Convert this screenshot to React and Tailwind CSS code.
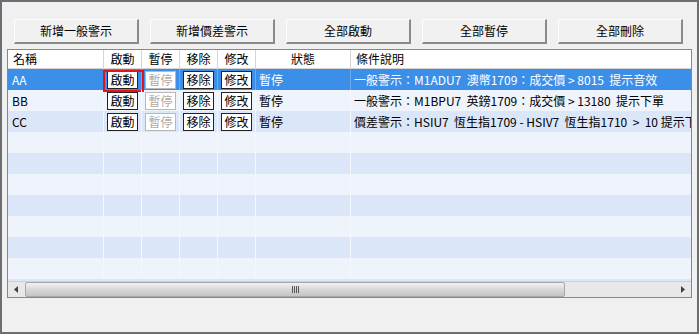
import React from 'react';

const FONT = "font-['Noto_Sans_CJK_TC','Noto_Sans',sans-serif]";

const topButtons = ['新增一般警示', '新增價差警示', '全部啟動', '全部暫停', '全部刪除'];

const rows = [
  { name: 'AA', status: '暫停', cond: '一般警示：M1ADU7  澳幣1709：成交價 > 8015  提示音效', selected: true },
  { name: 'BB', status: '暫停', cond: '一般警示：M1BPU7  英鎊1709：成交價 > 13180  提示下單' },
  { name: 'CC', status: '暫停', cond: '價差警示：HSIU7  恆生指1709 - HSIV7  恆生指1710  >  10 提示下單' },
];

const COLS = 'grid grid-cols-[96px_38px_38px_38px_38px_95px_1fr]';

const CellButton = ({ label, disabled }) => (
  <span
    className={`inline-flex h-[18px] items-center justify-center px-[2px] leading-none border bg-white text-[12px] ${
      disabled ? 'border-[#b8b8b8] text-[#b0a89c]' : 'border-[#222] text-black'
    }`}
  >
    {label}
  </span>
);

const Row = ({ row, index }) => {
  const bg = row?.selected ? 'bg-[#3c8fe8] text-white' : index % 2 === 1 ? 'bg-[#eef3fc] text-black' : 'bg-[#dbe6f8] text-black';
  const line = row?.selected ? 'border-[#6aaaf0]' : 'border-[#f4f7fd]';
  return (
    <div className={`${COLS} h-[21px] ${bg} text-[12px]`}>
      <div className={`flex items-center pl-[4px] border-r ${line}`}>{row?.name}</div>
      <div className={`relative flex items-center justify-center border-r ${line}`}>
        {row && <CellButton label="啟動" />}
        {row?.selected && <div className="absolute left-[-1px] top-[1px] h-[22px] w-[41px] border-2 border-[#e0141e]" />}
      </div>
      <div className={`flex items-center justify-center border-r ${line}`}>{row && <CellButton label="暫停" disabled />}</div>
      <div className={`flex items-center justify-center border-r ${line}`}>{row && <CellButton label="移除" />}</div>
      <div className={`flex items-center justify-center border-r ${line}`}>{row && <CellButton label="修改" />}</div>
      <div className={`flex items-center pl-[3px] border-r ${line}`}>{row?.status}</div>
      <div className="flex items-center pl-[3px] whitespace-pre overflow-hidden">{row?.cond}</div>
    </div>
  );
};

export default function App() {
  const body = Array.from({ length: 10 }, (_, i) => rows[i]);
  return (
    <div className={`${FONT} w-[699px] h-[334px] bg-[#f0f0f0] border-2 border-[#6b6f74] flex flex-col overflow-hidden`}>
      {/* action buttons */}
      <div className="flex gap-[11px] pl-[12px] pt-[17px]">
        {topButtons.map((b) => (
          <button
            key={b}
            className="w-[125px] h-[25px] bg-[#f1f1f1] border-t border-l border-t-[#fdfdfd] border-l-[#fdfdfd] border-b-2 border-r-2 border-b-[#8a8a8a] border-r-[#8a8a8a] text-[12px] text-black"
          >
            {b}
          </button>
        ))}
      </div>

      {/* list view */}
      <div className="ml-[5px] mt-[5px] w-[685px] h-[249px] border border-[#828790] bg-white flex flex-col overflow-hidden">
        <div className={`${COLS} h-[19px] text-[12px] bg-white border-b border-[#d5d5d5]`}>
          <div className="flex items-center pl-[5px] border-r border-[#d5d5d5]">名稱</div>
          <div className="flex items-center justify-center border-r border-[#d5d5d5]">啟動</div>
          <div className="flex items-center justify-center border-r border-[#d5d5d5]">暫停</div>
          <div className="flex items-center justify-center border-r border-[#d5d5d5]">移除</div>
          <div className="flex items-center justify-center border-r border-[#d5d5d5]">修改</div>
          <div className="flex items-center justify-center border-r border-[#d5d5d5]">狀態</div>
          <div className="flex items-center pl-[5px]">條件說明</div>
        </div>
        <div className="flex-1 overflow-hidden bg-[#dbe6f8]">
          {body.map((r, i) => (
            <Row key={i} row={r} index={i} />
          ))}
        </div>
        {/* horizontal scrollbar */}
        <div className="h-[16px] flex items-stretch bg-[#e8e8e8] border-t border-[#d0d0d0]">
          <div className="w-[17px] flex items-center justify-center">
            <svg width="5" height="7" viewBox="0 0 5 7"><path d="M4 0L0 3.5L4 7Z" fill="#404040" /></svg>
          </div>
          <div className="w-[540px] rounded-[2px] border border-[#a8a8a8] bg-gradient-to-b from-[#f2f2f2] via-[#d8d8d8] to-[#c4c4c4] flex items-center justify-center">
            <svg width="7" height="7" viewBox="0 0 7 7">
              <path d="M0.5 0V7M2.5 0V7M4.5 0V7M6.5 0V7" stroke="#555" strokeWidth="1" />
            </svg>
          </div>
          <div className="flex-1 flex items-center justify-end pr-[6px]">
            <svg width="5" height="7" viewBox="0 0 5 7"><path d="M1 0L5 3.5L1 7Z" fill="#404040" /></svg>
          </div>
        </div>
      </div>
    </div>
  );
}
